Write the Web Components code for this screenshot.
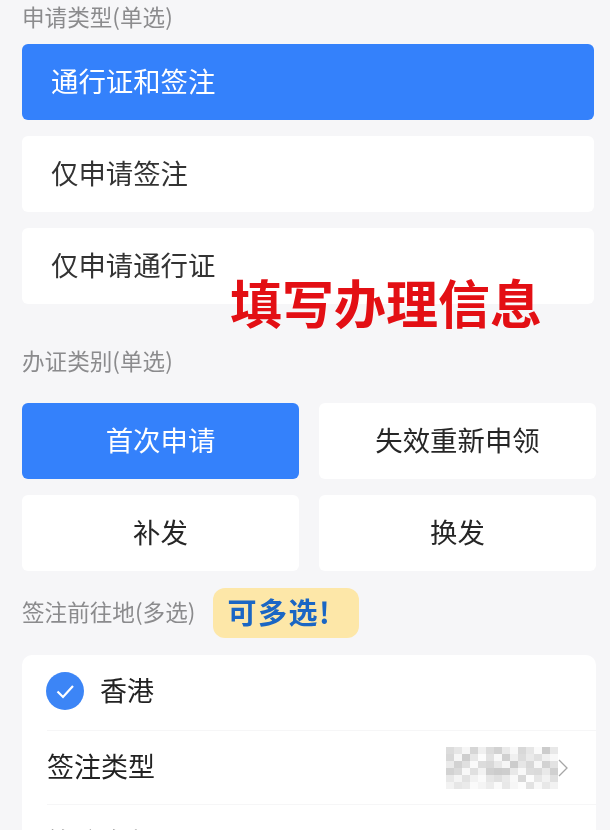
<!doctype html>
<html lang="zh">
<head>
<meta charset="utf-8">
<title>填写办理信息</title>
<style>
  html, body { margin: 0; height: 830px; overflow: hidden; background: #f6f6f8; }
  body { font-family: "Noto Sans CJK SC", "Noto Sans", sans-serif; }
</style>
</head>
<body>
<form-page>
  <form-label>申请类型(单选)</form-label>
  <option-list>
    <option-button selected align="left">通行证和签注</option-button>
    <option-button align="left">仅申请签注</option-button>
    <option-button align="left">仅申请通行证</option-button>
  </option-list>

  <form-label style="--label-top: 40px; --label-bottom: 23px">办证类别(单选)</form-label>
  <option-grid>
    <option-button selected>首次申请</option-button>
    <option-button style="color:#262626">失效重新申领</option-button>
    <option-button style="color:#262626">补发</option-button>
    <option-button style="color:#262626">换发</option-button>
  </option-grid>

  <form-label style="--label-top: 17px; --label-bottom: 17px; --label-height: 50px">
    签注前往地(多选)
    <hint-pill slot="extra">可多选!</hint-pill>
  </form-label>

  <place-card>
    <check-row>香港</check-row>
    <info-row>签注类型<mosaic-block slot="value"></mosaic-block></info-row>
    <info-row style="padding-bottom:0">签注次数<span slot="value" style="color:#8c8c8c;font-size:24px;margin-right:22px">请选择</span></info-row>
  </place-card>

  <sticker-text>填写办理信息</sticker-text>
</form-page>

<script>
/**
 * FormPage
 */
customElements.define('form-page', class FormPage extends HTMLElement {
constructor() {
  super();
  this.attachShadow({mode: 'open'}).innerHTML = `
<style>
  :host {
    display: block;
    position: relative;
    height: 830px;
    overflow: hidden;
    box-sizing: border-box;
    padding: 0 14px 0 22px;
    filter: blur(0.55px);
  }
</style>
<slot></slot>
`;
}
});

/**
 * FormLabel
 */
customElements.define('form-label', class FormLabel extends HTMLElement {
constructor() {
  super();
  this.attachShadow({mode: 'open'}).innerHTML = `
<style>
  :host {
    display: flex;
    align-items: center;
    gap: 18px;
    height: var(--label-height, 36px);
    margin: var(--label-top, 0) 0 var(--label-bottom, 8px);
    color: #8b8b8d;
    font-size: 22.6px;
    white-space: nowrap;
  }
  span { margin-top: -3px; }
</style>
<span><slot></slot></span>
<slot name="extra"></slot>
`;
}
});

/**
 * HintPill
 */
customElements.define('hint-pill', class HintPill extends HTMLElement {
constructor() {
  super();
  this.attachShadow({mode: 'open'}).innerHTML = `
<style>
  :host {
    display: flex;
    align-items: center;
    box-sizing: border-box;
    width: 146px;
    height: 50px;
    padding: 0 0 4px 14px;
    border-radius: 12px;
    background: #fde7a8;
    color: #1a66c4;
    font-size: 29px;
    font-weight: 700;
    letter-spacing: 1.5px;
  }
</style>
<slot></slot>
`;
}
});

/**
 * OptionList
 */
customElements.define('option-list', class OptionList extends HTMLElement {
constructor() {
  super();
  this.attachShadow({mode: 'open'}).innerHTML = `
<style>
  :host {
    display: flex;
    flex-direction: column;
    gap: 16px;
    margin-right: 2px;
  }
</style>
<slot></slot>
`;
}
});

/**
 * OptionGrid
 */
customElements.define('option-grid', class OptionGrid extends HTMLElement {
constructor() {
  super();
  this.attachShadow({mode: 'open'}).innerHTML = `
<style>
  :host {
    display: grid;
    grid-template-columns: 277px 277px;
    column-gap: 20px;
    row-gap: 16px;
  }
</style>
<slot></slot>
`;
}
});

/**
 * OptionButton
 */
customElements.define('option-button', class OptionButton extends HTMLElement {
constructor() {
  super();
  this.attachShadow({mode: 'open'}).innerHTML = `
<style>
  :host {
    display: flex;
    align-items: center;
    justify-content: center;
    box-sizing: border-box;
    height: 76px;
    padding-bottom: 5px;
    border-radius: 6px;
    background: #fff;
    color: #333;
    font-size: 27.4px;
  }
  :host([align="left"]) {
    justify-content: flex-start;
    padding-left: 29px;
  }
  :host([selected]) {
    background: #3481fb;
    color: #fff;
  }
</style>
<slot></slot>
`;
}
});

/**
 * PlaceCard
 */
customElements.define('place-card', class PlaceCard extends HTMLElement {
constructor() {
  super();
  this.attachShadow({mode: 'open'}).innerHTML = `
<style>
  :host {
    display: block;
    padding-left: 25px;
    border-radius: 10px;
    background: #fff;
  }
</style>
<slot></slot>
`;
}
});

/**
 * CheckRow
 */
customElements.define('check-row', class CheckRow extends HTMLElement {
constructor() {
  super();
  this.attachShadow({mode: 'open'}).innerHTML = `
<style>
  :host {
    display: flex;
    align-items: center;
    gap: 16px;
    box-sizing: border-box;
    height: 75px;
    padding-bottom: 3px;
    color: #222;
    font-size: 27px;
  }
  svg { display: block; margin-left: -1px; }
  span { margin-top: -3px; }
</style>
<svg width="38" height="38" viewBox="0 0 38 38">
  <circle cx="19" cy="19" r="19" fill="#3c85f6"/>
  <path d="M11.5 19.5l5.5 5.5 10-11" fill="none" stroke="#fff" stroke-width="2.2"/>
</svg>
<span><slot></slot></span>
`;
}
});

/**
 * InfoRow
 */
customElements.define('info-row', class InfoRow extends HTMLElement {
constructor() {
  super();
  this.attachShadow({mode: 'open'}).innerHTML = `
<style>
  :host {
    display: flex;
    align-items: center;
    justify-content: space-between;
    height: 74px;
    box-sizing: border-box;
    padding-bottom: 4px;
    border-top: 1px solid #f6f6f7;
    color: #222;
    font-size: 27px;
  }
  .value { display: flex; align-items: center; margin-bottom: -4px; }
  svg { display: block; margin: 0 28px 0 0; }
</style>
<slot></slot>
<div class="value">
  <slot name="value"></slot>
  <svg width="10" height="20" viewBox="0 0 10 20">
    <path d="M1 2l8 8-8 8" fill="none" stroke="#a6a6a6" stroke-width="1.3"/>
  </svg>
</div>
`;
}
});

/**
 * MosaicBlock: the censored value, drawn as grey cells
 */
customElements.define('mosaic-block', class MosaicBlock extends HTMLElement {
constructor() {
  super();
  const shades = [
    'dc','e6','f6','d6','f0','dc','d2','ea','f8','d8','e6','fa','cc','e8',
    'd8','f6','ce','e8','fc','e2','f8','d0','f0','dc','ea','e0','f0','f8',
    'ea','d2','e0','fa','dc','d8','e8','f6','cc','e6','d8','f6','d2','e2',
    'd2','da','f8','e0','f2','d0','cc','ce','e8','f8','dc','da','e9','d0',
    'e8','f4','e2','f2','fa','e6','e0','ea','f8','d8','fc','e6','f2','e0',
    'f2','e6','ea','fa','f4','ec','fa','e8','f6','fc','e2','f8','e8','f2'
  ];
  const cells = shades.map(s => `<i style="background:#${s}${s}${s}"></i>`).join('');
  this.attachShadow({mode: 'open'}).innerHTML = `
<style>
  :host {
    display: block;
    width: 112px;
    height: 42px;
    overflow: hidden;
  }
  .cells {
    display: grid;
    grid-template-columns: repeat(14, 8px);
    grid-auto-rows: 7px;
    filter: blur(0.7px);
  }
  i { display: block; }
</style>
<div class="cells">${cells}</div>
`;
}
});

/**
 * StickerText: the red caption laid over the form
 */
customElements.define('sticker-text', class StickerText extends HTMLElement {
constructor() {
  super();
  this.attachShadow({mode: 'open'}).innerHTML = `
<style>
  :host {
    position: absolute;
    left: 230px;
    top: 264px;
    color: #e30f14;
    font-size: 52px;
    font-weight: 700;
    line-height: 76px;
    white-space: nowrap;
  }
</style>
<slot></slot>
`;
}
});
</script>
</body>
</html>
